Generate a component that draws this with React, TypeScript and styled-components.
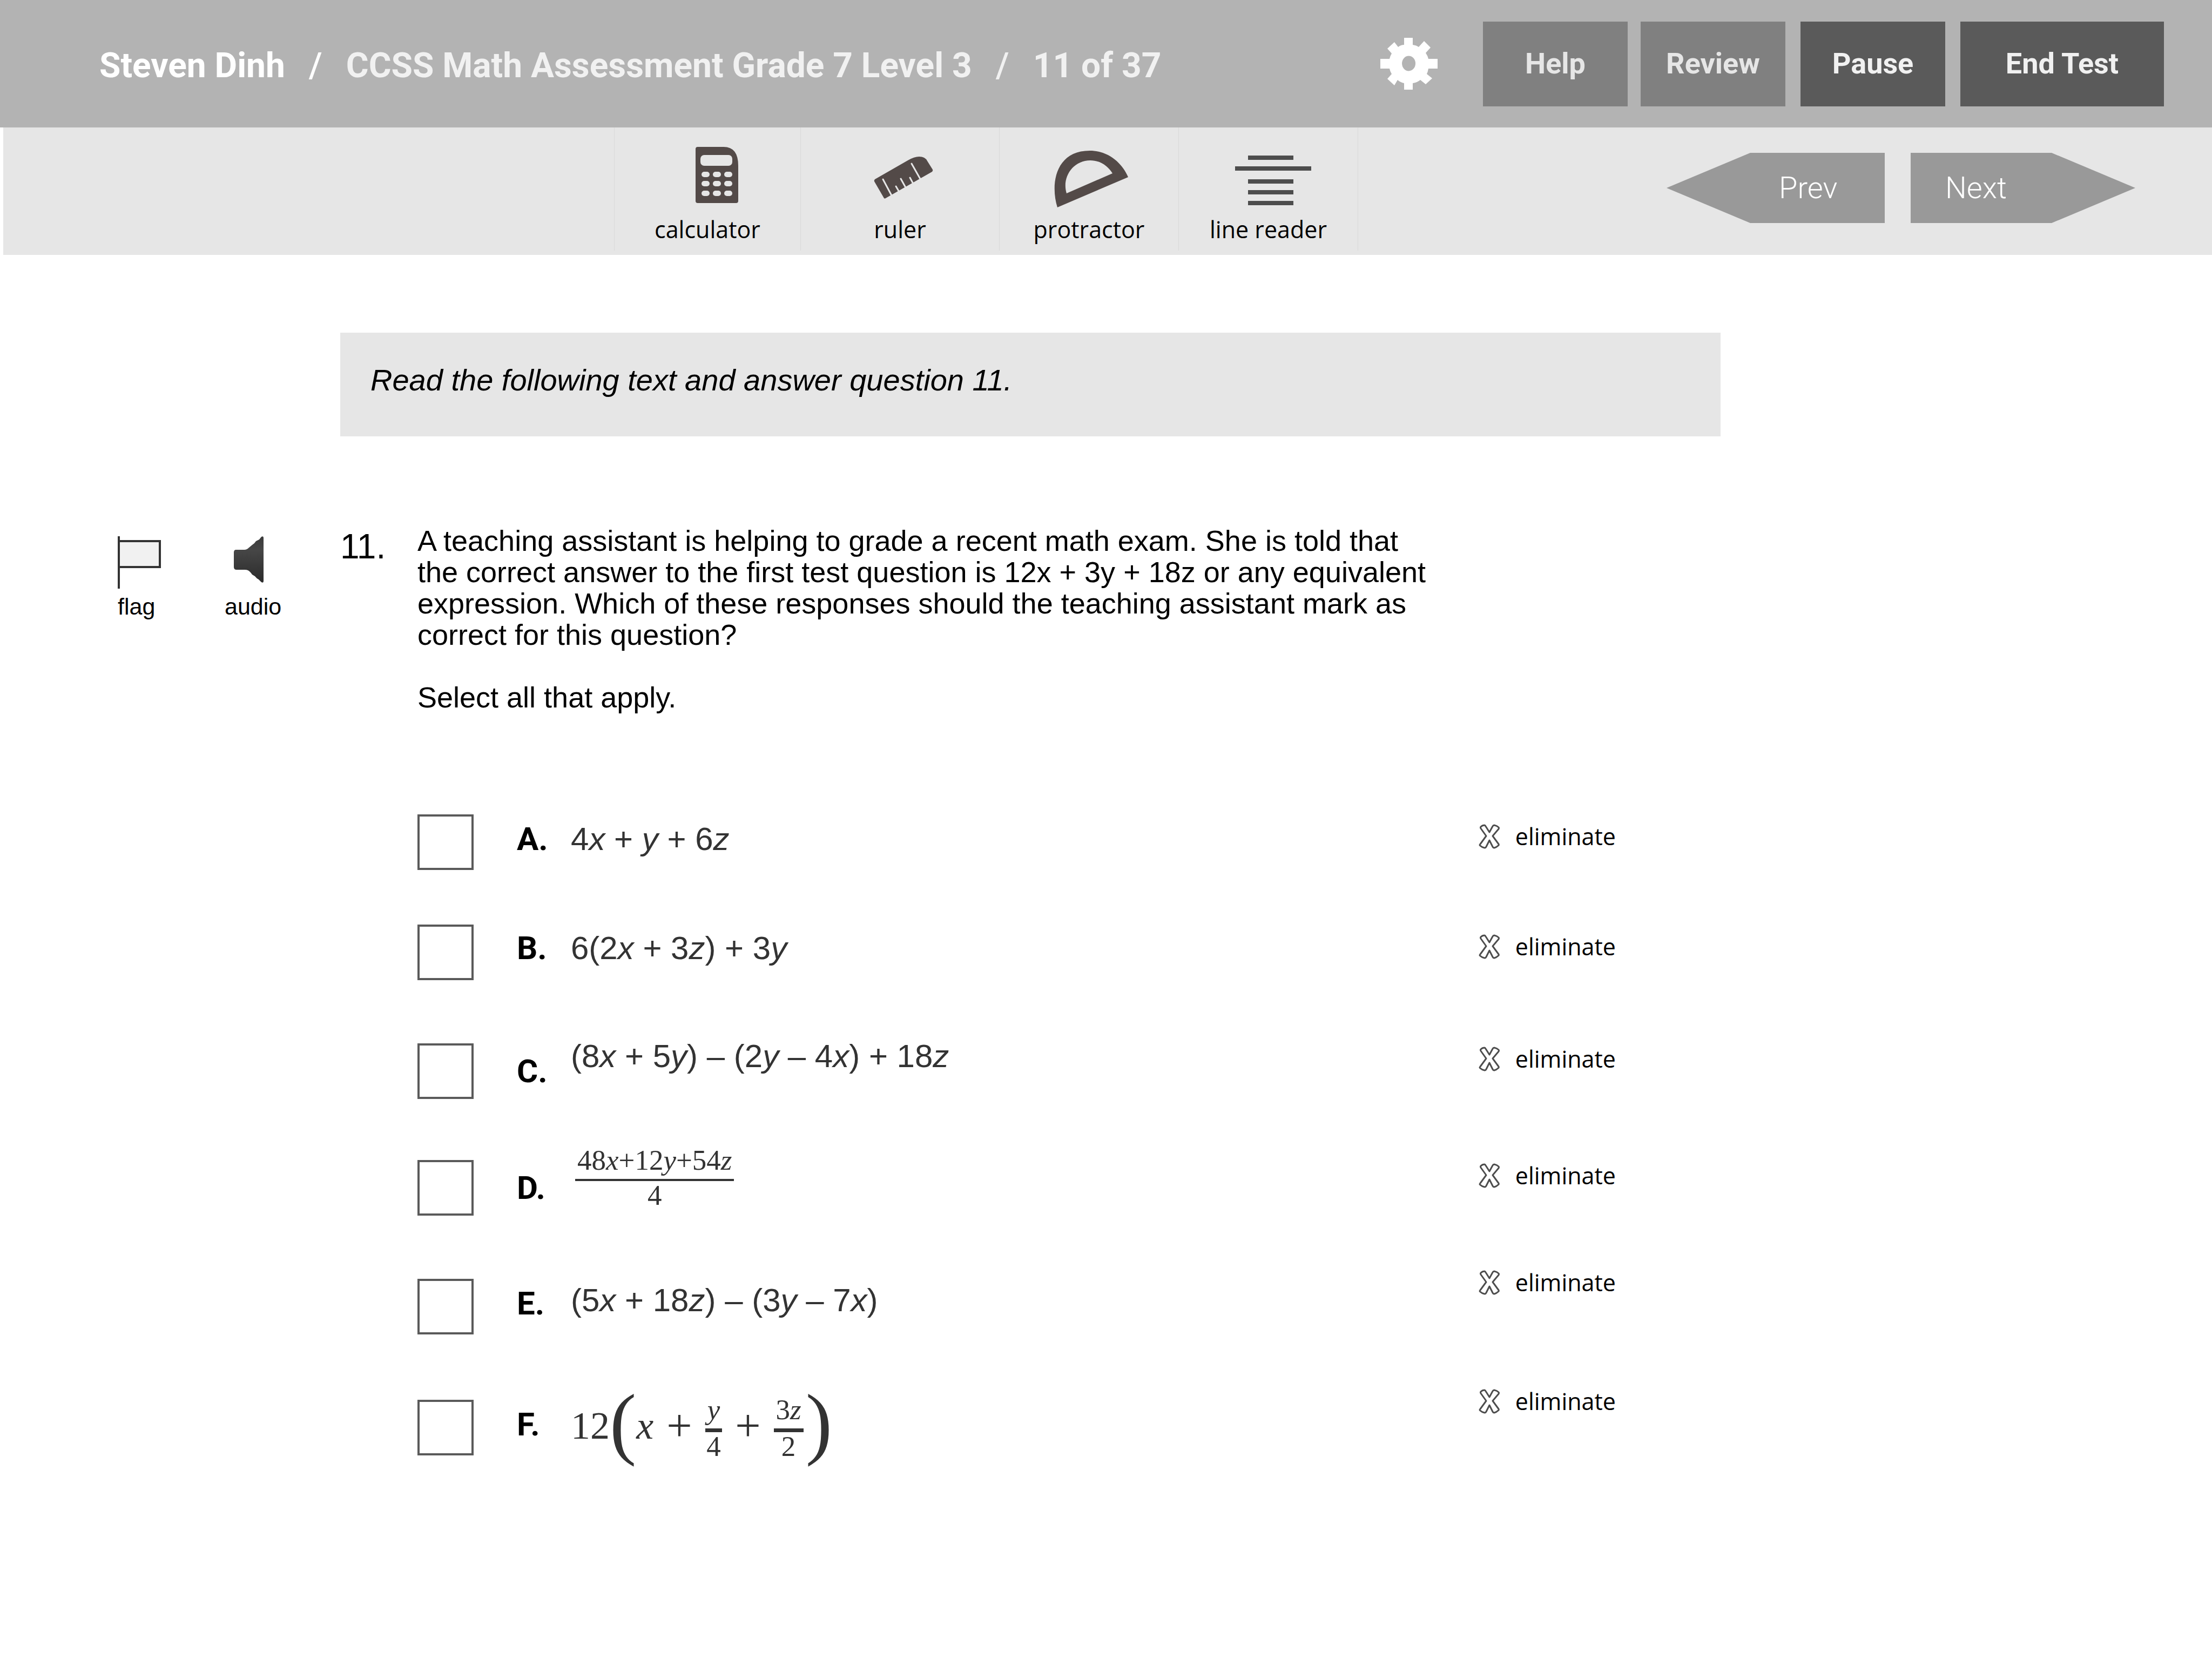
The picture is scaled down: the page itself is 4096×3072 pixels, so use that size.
import React from "react";
import styled, { createGlobalStyle } from "styled-components";

const GlobalStyle = createGlobalStyle`
  *, *::before, *::after { box-sizing: border-box; }
  body {
    margin: 0;
    background: #ffffff;
    color: #000000;
    font-family: "Liberation Sans", Arial, sans-serif;
  }
  button { border: 0; padding: 0; background: none; color: inherit; cursor: pointer; }
  p, h1, h2 { margin: 0; }
  svg { display: block; flex: none; }
`;

const heading = `"Roboto", "Liberation Sans", sans-serif`;
const caption = `"Open Sans", "Noto Sans", sans-serif`;
const serif = `"Liberation Serif", "Times New Roman", serif`;

/* ---------- header ---------- */

const Header = styled.header`
  display: flex;
  align-items: center;
  height: 236px;
  padding: 0 89px 0 184px;
  background: #b3b3b3;
`;

const Title = styled.h1`
  display: flex;
  gap: 44px;
  flex: 1;
  padding-top: 8px;
  font: 700 64px/72px ${heading};
  color: #f1f1f1;
  white-space: nowrap;
`;

const Student = styled.span`
  color: #ffffff;
`;

const Slash = styled.span<{ $bright?: boolean }>`
  font-weight: 500;
  color: ${(p) => (p.$bright ? "#ffffff" : "#f1f1f1")};
`;

const SettingsButton = styled.button`
  margin-right: 84px;
`;

const HeaderActions = styled.div`
  display: flex;
  gap: 28px;
`;

const ActionPair = styled.div`
  display: flex;
  gap: 24px;
`;

const ActionButton = styled.button<{ $strong?: boolean; $wide?: boolean }>`
  width: ${(p) => (p.$wide ? 377 : 268)}px;
  height: 157px;
  background: ${(p) => (p.$strong ? "#5a5a5a" : "#808080")};
  color: ${(p) => (p.$strong ? "#f1f1f1" : "#e6e6e6")};
  font: 700 54px/64px ${heading};
  text-align: center;
`;

/* ---------- toolbar ---------- */

const Toolbar = styled.nav`
  display: flex;
  align-items: flex-start;
  height: 236px;
  margin-left: 6px;
  padding: 0 142px 0 1131px;
  background: #e6e6e6;
`;

const Tools = styled.div`
  display: flex;
  border-left: 1px solid #d9d9d9;
`;

const Tool = styled.button<{ $width: number }>`
  display: flex;
  flex-direction: column;
  align-items: center;
  gap: 10px;
  width: ${(p) => p.$width}px;
  height: 228px;
  padding-top: 35px;
  border-right: 1px solid #d9d9d9;
  font: 400 43px/48px ${caption};
  color: #000000;
`;

const Pager = styled.div`
  display: flex;
  gap: 48px;
  margin: 47px 0 0 auto;
`;

const PagerButton = styled.button<{ $back?: boolean }>`
  width: ${(p) => (p.$back ? 404 : 416)}px;
  height: 130px;
  padding-left: ${(p) => (p.$back ? 208 : 64)}px;
  background: #999999;
  clip-path: ${(p) =>
    p.$back
      ? "polygon(0 50%, 155px 0, 100% 0, 100% 100%, 155px 100%)"
      : "polygon(0 0, 261px 0, 100% 50%, 261px 100%, 0 100%)"};
  color: #ffffff;
  font: 300 56px/64px ${heading};
  text-align: left;
`;

/* ---------- question ---------- */

const Instruction = styled.p`
  max-width: 2556px;
  margin: 144px 400px 0 630px;
  padding: 56px 56px 72px;
  background: #e6e6e6;
  font-size: 56px;
  font-style: italic;
  line-height: 64px;
`;

const Question = styled.section`
  display: grid;
  grid-template-columns: 412px 143px 1fr;
  margin-top: 164px;
  padding-left: 218px;
`;

const SideTools = styled.div`
  display: flex;
  align-items: flex-start;
  gap: 118px;
  padding-top: 21px;
`;

const SideTool = styled.button`
  display: flex;
  flex-direction: column;
  align-items: flex-start;
  gap: 8px;
  font: 400 43px/48px "Liberation Sans", Arial, sans-serif;
`;

const QuestionNumber = styled.h2`
  padding-top: 8px;
  font-size: 64px;
  font-weight: 400;
  line-height: 64px;
`;

const Prompt = styled.div`
  display: grid;
  gap: 58px;
  max-width: 1884px;
  font-size: 54px;
  line-height: 58px;
`;

const Answers = styled.ul`
  margin: 164px 0 0;
  padding: 0;
  max-width: 2219px;
  list-style: none;
`;

const Answer = styled.li<{ $height: number }>`
  display: grid;
  grid-template-columns: 184px 100px 1fr auto;
  align-items: start;
  height: ${(p) => p.$height}px;
`;

const Tick = styled.input`
  appearance: none;
  width: 104px;
  height: 103px;
  margin: 24px 0 0;
  border: 4px solid #5a5a5a;
  background: #ffffff;
  &:checked { background: #5a5a5a; }
`;

const Letter = styled.span<{ $top: number }>`
  padding-top: ${(p) => p.$top}px;
  font: 700 60px/60px ${heading};
`;

const Formula = styled.label<{ $top: number }>`
  display: flex;
  align-items: center;
  padding-top: ${(p) => p.$top}px;
  color: #333333;
  font-size: 60px;
  line-height: 60px;
  white-space: pre;
`;

const Eliminate = styled.button<{ $top: number }>`
  display: flex;
  align-items: center;
  gap: 28px;
  padding-top: ${(p) => p.$top}px;
  font: 400 43px/46px ${caption};
`;

const Fraction = styled.span<{ $bar: number; $inset?: boolean }>`
  display: inline-flex;
  flex-direction: column;
  align-items: stretch;
  margin-left: ${(p) => (p.$inset ? 8 : 0)}px;
  padding-bottom: 8px;
  font: 400 53px/44px ${serif};
  text-align: center;
  & > span:first-child {
    padding: 0 4px;
    margin-bottom: 13px;
  }
  & > span:last-child {
    padding-top: 4px;
    border-top: ${(p) => p.$bar}px solid #333333;
  }
`;

const SerifTerm = styled.span`
  padding-bottom: 16px;
  font: 400 72px/72px ${serif};
`;

const Operator = styled(SerifTerm)`
  margin: 0 24px;
  font-size: 84px;
`;

const TallParen = styled.span<{ $close?: boolean }>`
  margin-left: ${(p) => (p.$close ? 4 : 0)}px;
  padding-bottom: 28px;
  font: 400 148px/108px ${serif};
`;

/* ---------- drawings ---------- */

const Gear = () => (
  <svg width="106" height="96" viewBox="0 0 106 96" fill="#ffffff" aria-hidden="true">
    <path
      fillRule="evenodd"
      d="M44 0H60V13Q67 14 71 17L81 6L93 18L84 28Q88 34 89 39H106V57H89Q88 63 86 67L96 75L84 86L74 78Q68 83 60 84V96H44V84Q36 82 32 78L26 88L13 76L21 67Q18 62 17 57H0V39H17Q18 34 21 29L13 20L26 8L33 17Q38 13 44 13ZM52.500 33.500A12.500 14 0 1 0 52.600 61.500A12.500 14 0 1 0 52.500 33.500Z"
    />
  </svg>
);

const CalculatorIcon = () => (
  <svg width="160" height="120" viewBox="0 0 160 120" aria-hidden="true">
    <path d="M62 1H110Q137 1 137 36V101Q137 105 133 105H62Q58 105 58 101V5Q58 1 62 1Z" fill="#534a48" />
    <g fill="#e6e6e6">
      <rect x="67" y="16" width="59" height="20" rx="7" />
      {[47, 64, 82].map((y) =>
        [69, 90, 111].map((x) => <rect key={`${x}-${y}`} x={x} y={y} width="15" height="10" rx="5" />)
      )}
    </g>
  </svg>
);

const RulerIcon = () => (
  <svg width="160" height="120" viewBox="0 0 160 120" aria-hidden="true">
    <path
      d="M33 61L94 26Q106 19 115 19Q126 19 130 27L140 43Q141 45 139 47L53 96Q51 97 50 96L32 65Q31 63 33 61Z"
      fill="#534a48"
    />
    <path
      d="M48 61L64 91M72 74L79 86M81 60L91 78M98 58L105 71M101 32L118 62"
      stroke="#e6e6e6"
      strokeWidth="3"
      strokeLinecap="round"
    />
  </svg>
);

const ProtractorIcon = () => (
  <svg width="160" height="120" viewBox="0 0 160 120" aria-hidden="true">
    <path
      fillRule="evenodd"
      d="M21 113C8 72 16 8 81 8C117 8 142 33 152 57ZM38 87L123 50C114 36 100 26 82 26C49 26 29 58 38 87Z"
      fill="#534a48"
    />
  </svg>
);

const LineReaderIcon = () => (
  <svg width="160" height="120" viewBox="0 0 160 120" fill="#4d4d4d" aria-hidden="true">
    <rect x="42" y="17" width="84" height="8" />
    <rect x="18" y="37" width="141" height="8" />
    <rect x="42" y="61" width="84" height="8" />
    <rect x="42" y="81" width="84" height="8" />
    <rect x="42" y="101" width="84" height="8" />
  </svg>
);

const FlagIcon = () => (
  <svg width="80" height="98" viewBox="0 0 80 98" aria-hidden="true">
    <rect x="2" y="9" width="76" height="48" fill="#f1f1f1" stroke="#333333" strokeWidth="4" />
    <rect width="4" height="97" fill="#333333" />
  </svg>
);

const AudioIcon = () => (
  <svg width="73" height="98" viewBox="-17 0 73 98" aria-hidden="true">
    <defs>
      <linearGradient id="speaker" x1="0" y1="0" x2="0" y2="1">
        <stop offset="0" stopColor="#3a3a3a" />
        <stop offset="0.3" stopColor="#464646" />
        <stop offset="1" stopColor="#2b2b2b" />
      </linearGradient>
    </defs>
    <path
      d="M4 25H20Q24 25 28 21L34 16Q38 14 41 9L47 6L51 1Q55 -1 55 3V83Q55 87 51 85L46 80Q42 78 39 74L34 71Q30 65 26 63Q24 62 20 62H5Q0 62 0 57V30Q0 25 4 25Z"
      fill="url(#speaker)"
    />
  </svg>
);

const CrossIcon = () => (
  <svg width="40" height="46" viewBox="0 0 40 46" aria-hidden="true">
    <path
      d="M4 5Q7 2 11 2Q12 2 13 4L20 15L26 4Q27 2 29 2Q34 3 37 6Q38 7 37 9L26 22L37 37Q38 39 36 40Q33 43 29 44Q27 44 26 42L20 30L14 42Q13 44 11 44Q6 43 3 40Q1 39 3 37L14 22L4 8Q3 6 4 5Z"
      fill="#ffffff"
      stroke="#4d4d4d"
      strokeWidth="3"
      strokeLinejoin="round"
    />
  </svg>
);

/* ---------- data ---------- */

const tools = [
  { name: "calculator", width: 345, icon: <CalculatorIcon /> },
  { name: "ruler", width: 368, icon: <RulerIcon /> },
  { name: "protractor", width: 332, icon: <ProtractorIcon /> },
  { name: "line reader", width: 332, icon: <LineReaderIcon /> },
];

type Option = {
  letter: string;
  height: number;
  letterTop: number;
  formulaTop: number;
  eliminateTop: number;
  formula: React.ReactNode;
};

const options: Option[] = [
  {
    letter: "A", height: 204, letterTop: 40, formulaTop: 40, eliminateTop: 42,
    formula: <span>4<i>x</i> + <i>y</i> + 6<i>z</i></span>,
  },
  {
    letter: "B", height: 220, letterTop: 38, formulaTop: 38, eliminateTop: 42,
    formula: <span>6(2<i>x</i> + 3<i>z</i>) + 3<i>y</i></span>,
  },
  {
    letter: "C", height: 216, letterTop: 46, formulaTop: 18, eliminateTop: 30,
    formula: <span>(8<i>x</i> + 5<i>y</i>) – (2<i>y</i> – 4<i>x</i>) + 18<i>z</i></span>,
  },
  {
    letter: "D", height: 220, letterTop: 46, formulaTop: 2, eliminateTop: 30,
    formula: (
      <Fraction $bar={4} $inset>
        <span>48<i>x</i>+12<i>y</i>+54<i>z</i></span>
        <span>4</span>
      </Fraction>
    ),
  },
  {
    letter: "E", height: 224, letterTop: 40, formulaTop: 34, eliminateTop: 8,
    formula: <span>(5<i>x</i> + 18<i>z</i>) – (3<i>y</i> – 7<i>x</i>)</span>,
  },
  {
    letter: "F", height: 204, letterTop: 40, formulaTop: 12, eliminateTop: 4,
    formula: (
      <>
        <SerifTerm>12</SerifTerm>
        <TallParen>(</TallParen>
        <SerifTerm><i>x</i></SerifTerm>
        <Operator>+</Operator>
        <Fraction $bar={7}>
          <span><i>y</i></span>
          <span>4</span>
        </Fraction>
        <Operator>+</Operator>
        <Fraction $bar={7}>
          <span>3<i>z</i></span>
          <span>2</span>
        </Fraction>
        <TallParen $close>)</TallParen>
      </>
    ),
  },
];

export default function App() {
  return (
    <>
      <GlobalStyle />
      <Header>
        <Title>
          <Student>Steven Dinh</Student>
          <Slash $bright>/</Slash>
          <span>CCSS Math Assessment Grade 7 Level 3</span>
          <Slash>/</Slash>
          <span>11 of 37</span>
        </Title>
        <SettingsButton type="button" aria-label="Settings">
          <Gear />
        </SettingsButton>
        <HeaderActions>
          <ActionPair>
            <ActionButton type="button">Help</ActionButton>
            <ActionButton type="button">Review</ActionButton>
          </ActionPair>
          <ActionButton type="button" $strong>Pause</ActionButton>
          <ActionButton type="button" $strong $wide>End Test</ActionButton>
        </HeaderActions>
      </Header>

      <Toolbar>
        <Tools>
          {tools.map((tool) => (
            <Tool key={tool.name} type="button" $width={tool.width}>
              {tool.icon}
              {tool.name}
            </Tool>
          ))}
        </Tools>
        <Pager>
          <PagerButton type="button" $back>Prev</PagerButton>
          <PagerButton type="button">Next</PagerButton>
        </Pager>
      </Toolbar>

      <main>
        <Instruction>Read the following text and answer question 11.</Instruction>
        <Question>
          <SideTools>
            <SideTool type="button">
              <FlagIcon />
              flag
            </SideTool>
            <SideTool type="button">
              <AudioIcon />
              audio
            </SideTool>
          </SideTools>
          <QuestionNumber>11.</QuestionNumber>
          <div>
            <Prompt>
              <p>
                A teaching assistant is helping to grade a recent math exam. She is told that the correct
                answer to the first test question is 12x + 3y + 18z or any equivalent expression. Which of
                these responses should the teaching assistant mark as correct for this question?
              </p>
              <p>Select all that apply.</p>
            </Prompt>
            <Answers>
              {options.map((o) => (
                <Answer key={o.letter} $height={o.height}>
                  <Tick type="checkbox" id={`answer-${o.letter}`} />
                  <Letter $top={o.letterTop}>{o.letter}.</Letter>
                  <Formula htmlFor={`answer-${o.letter}`} $top={o.formulaTop}>
                    {o.formula}
                  </Formula>
                  <Eliminate type="button" $top={o.eliminateTop}>
                    <CrossIcon />
                    eliminate
                  </Eliminate>
                </Answer>
              ))}
            </Answers>
          </div>
        </Question>
      </main>
    </>
  );
}
